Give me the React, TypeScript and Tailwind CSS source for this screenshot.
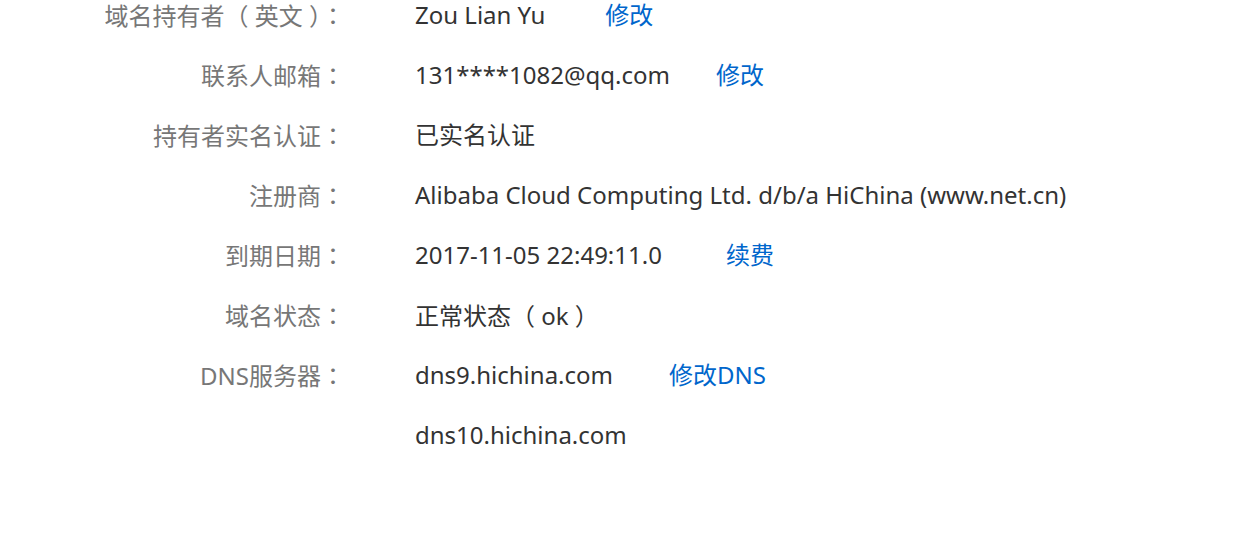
const rows: { label: string; value: string; link?: string; gap?: string }[] = [
  { label: "域名持有者（ 英文 ）：", value: "Zou Lian Yu", link: "修改", gap: "ml-[60px]" },
  { label: "联系人邮箱：", value: "131****1082@qq.com", link: "修改", gap: "ml-[46px]" },
  { label: "持有者实名认证：", value: "已实名认证" },
  { label: "注册商：", value: "Alibaba Cloud Computing Ltd. d/b/a HiChina (www.net.cn)" },
  { label: "到期日期：", value: "2017-11-05 22:49:11.0", link: "续费", gap: "ml-[64px]" },
  { label: "域名状态：", value: "正常状态（ ok ）" },
  { label: "DNS服务器：", value: "dns9.hichina.com", link: "修改DNS", gap: "ml-[56px]" },
  { label: "", value: "dns10.hichina.com" },
];

// full-width punctuation is centred in the TC font, as in the screenshot
function Punct({ text }: { text: string }) {
  return (
    <>
      {text.split(/([（）：])/).map((part, i) =>
        /^[（）：]$/.test(part) ? (
          <span key={i} style={{ fontFamily: '"Noto Sans CJK TC", sans-serif' }}>
            {part}
          </span>
        ) : (
          <span key={i}>{part}</span>
        )
      )}
    </>
  );
}

export default function App() {
  return (
    <div
      className="h-[546px] w-[1244px] overflow-hidden bg-white text-[24px]"
      style={{ fontFamily: '"Noto Sans", "Noto Sans CJK SC", sans-serif' }}
    >
      <div className="flex flex-col gap-[30px]">
        {rows.map((row, i) => (
          <div key={i} className="flex h-[30px] items-center whitespace-nowrap leading-[30px]">
            <div className="w-[345px] shrink-0 text-right text-[#777]">
              <Punct text={row.label} />
            </div>
            <div className="ml-[70px] text-[#333]">
              <Punct text={row.value} />
            </div>
            {row.link && (
              <a href="#" className={`${row.gap} text-[#0066cc]`}>
                {row.link}
              </a>
            )}
          </div>
        ))}
      </div>
    </div>
  );
}
